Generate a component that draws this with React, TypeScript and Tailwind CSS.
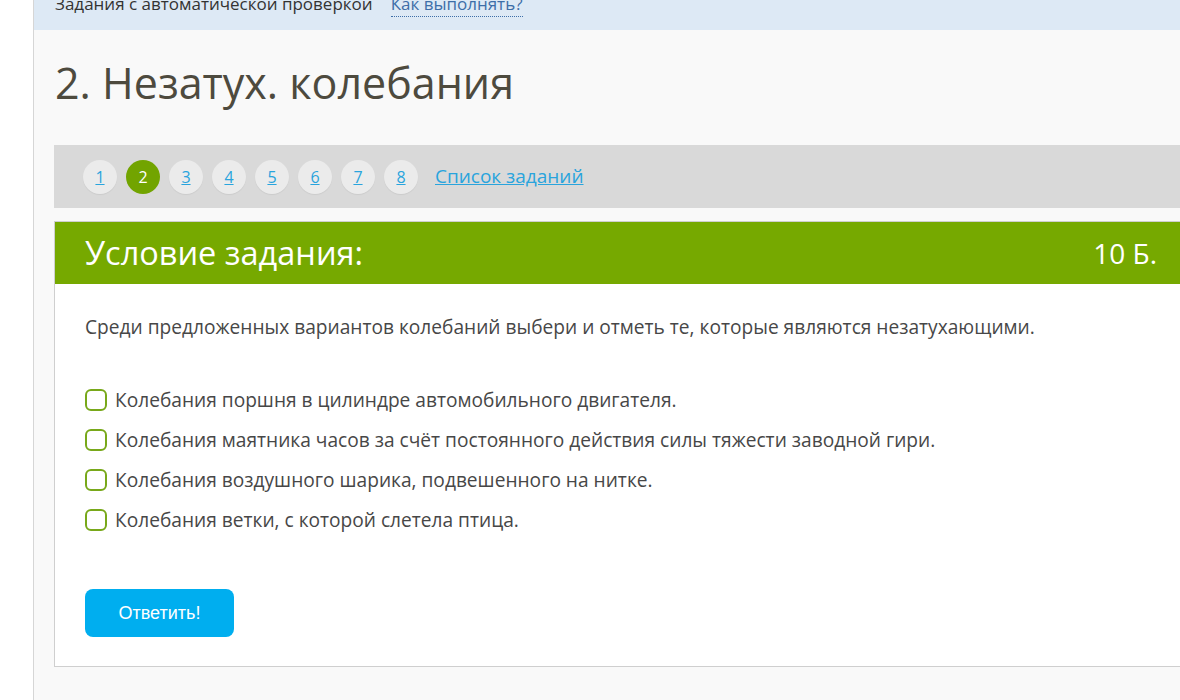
import React from 'react';

const pages = [1, 2, 3, 4, 5, 6, 7, 8];

const options = [
  'Колебания поршня в цилиндре автомобильного двигателя.',
  'Колебания маятника часов за счёт постоянного действия силы тяжести заводной гири.',
  'Колебания воздушного шарика, подвешенного на нитке.',
  'Колебания ветки, с которой слетела птица.',
];

const Checkbox: React.FC<{ label: string }> = ({ label }) => (
  <label className="flex items-center gap-2 h-[40px] cursor-pointer">
    <span className="w-[22px] h-[22px] rounded-[6px] border-[2.5px] border-[#78a81a] bg-white shrink-0" />
    <span>{label}</span>
  </label>
);

export default function App() {
  return (
    <div
      className="w-[1180px] h-[700px] overflow-hidden flex bg-white text-[#474747]"
      style={{ fontFamily: '"Open Sans", "Noto Sans", sans-serif' }}
    >
      {/* левая полоса */}
      <div className="w-[34px] shrink-0 bg-white border-r border-[#d6d6d6] shadow-[1px_0_3px_rgba(0,0,0,0.08)]" />

      <div className="flex-1 bg-[#f9f9f9] flex flex-col">
        {/* верхняя плашка */}
        <div className="h-[30px] bg-[#dde9f5] overflow-hidden pl-[21px] flex items-start">
          <div className="-mt-[8px] flex gap-[18px] text-[17px] leading-[24px]">
            <span className="text-[#333]">Задания с автоматической проверкой</span>
            <span className="text-[#3d6ea8] border-b border-dotted border-[#3d6ea8]">Как выполнять?</span>
          </div>
        </div>

        <div className="pl-[20px]">
          <h1 className="text-[43px] leading-[56px] text-[#4d4a3e] mt-[25px] ml-[1px] font-normal">
            2. Незатух. колебания
          </h1>

          {/* навигация по заданиям */}
          <div className="mt-[34px] h-[63px] bg-[#d9d9d9] flex items-center pl-[29px] gap-[9px]">
            {pages.map((p) =>
              p === 2 ? (
                <span
                  key={p}
                  className="w-[34px] h-[34px] rounded-full bg-[#72a400] text-white flex items-center justify-center text-[16px]"
                >
                  {p}
                </span>
              ) : (
                <a
                  key={p}
                  href="#"
                  className="w-[34px] h-[34px] rounded-full bg-[#ebebeb] text-[#29a4dd] underline flex items-center justify-center text-[16px] shadow-[0_1px_1px_rgba(0,0,0,0.06)]"
                >
                  {p}
                </a>
              )
            )}
            <a href="#" className="ml-[8px] text-[#29a4dd] underline text-[19px]">
              Список заданий
            </a>
          </div>

          {/* карточка задания */}
          <div className="mt-[13px] border border-[#cfcfcf] border-r-0 bg-white">
            <div className="h-[62px] bg-[#76a900] text-white flex items-center justify-between pl-[30px] pr-[23px]">
              <span className="text-[32.5px]">Условие задания:</span>
              <span className="text-[28px]">10 Б.</span>
            </div>
            <div className="pl-[30px] pt-[29px] pb-[29px] text-[19.15px]">
              <p className="leading-[28px]">
                Среди предложенных вариантов колебаний выбери и отметь те, которые являются незатухающими.
              </p>
              <div className="mt-[39px] flex flex-col">
                {options.map((o) => (
                  <Checkbox key={o} label={o} />
                ))}
              </div>
              <button
                className="mt-[49px] w-[149px] h-[48px] rounded-[8px] bg-[#00aeef] text-white text-[18px]"
                style={{ fontFamily: '"Liberation Sans", Arial, sans-serif' }}
              >
                Ответить!
              </button>
            </div>
          </div>
        </div>
      </div>
    </div>
  );
}
